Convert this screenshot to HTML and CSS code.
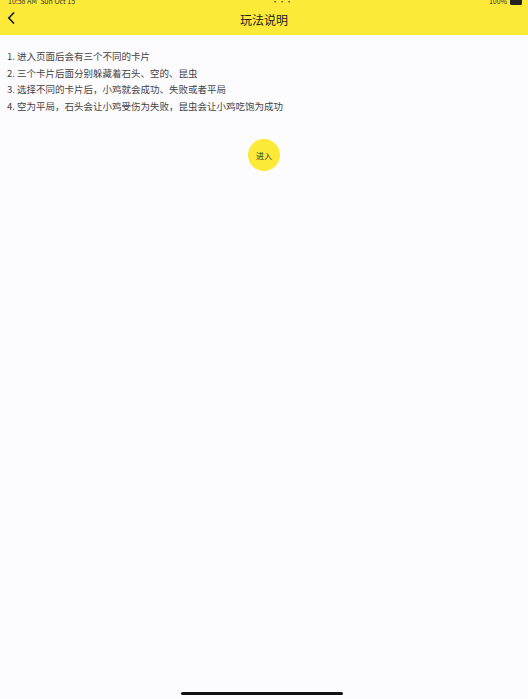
FILE: index.html
```html
<!DOCTYPE html>
<html lang="zh">
<head>
<meta charset="utf-8">
<link rel="stylesheet" href="styles.css">
</head>
<body>
<div class="page">
  <header class="topbar">
    <div class="status">
      <span class="status-left">10:58 AM&nbsp;&nbsp;Sun Oct 15</span>
      <span class="status-mid">•••</span>
      <span class="status-right">100% <span class="battery"></span></span>
    </div>
    <div class="nav">
      <svg class="back" width="8" height="12" viewBox="0 0 8 12"><path d="M6.5 1 L1.8 6 L6.5 11" fill="none" stroke="#222" stroke-width="1.8" stroke-linecap="round" stroke-linejoin="round"/></svg>
      <div class="title">玩法说明</div>
    </div>
  </header>
  <main class="content">
    <ol class="rules">
      <li>1. 进入页面后会有三个不同的卡片</li>
      <li>2. 三个卡片后面分别躲藏着石头、空的、昆虫</li>
      <li>3. 选择不同的卡片后，小鸡就会成功、失败或者平局</li>
      <li>4. 空为平局，石头会让小鸡受伤为失败，昆虫会让小鸡吃饱为成功</li>
    </ol>
    <div class="btn-wrap"><div class="enter">进入</div></div>
  </main>
  <div class="home"></div>
</div>
</body>
</html>
```
FILE: styles.css
```css
html, body {
  margin: 0;
  padding: 0;
  background: #fcfbfd;
  font-family: "Noto Sans CJK SC", "Noto Sans", sans-serif;
}
.page {
  width: 528px;
  height: 699px;
  display: flex;
  flex-direction: column;
  position: relative;
  overflow: hidden;
}
.topbar {
  background: #fde937;
  height: 35px;
  display: flex;
  flex-direction: column;
}
.status {
  height: 8px;
  display: flex;
  justify-content: space-between;
  align-items: flex-end;
  font-size: 7px;
  line-height: 7px;
  color: #333;
  padding: 0 6px 0 8px;
  margin-top: -3px;
}
.status-right {
  display: flex;
  align-items: center;
  gap: 3px;
}
.battery {
  display: inline-block;
  width: 12px;
  height: 6px;
  background: #222;
  border-radius: 1.5px;
}
.nav {
  flex: 1;
  display: flex;
  align-items: center;
  justify-content: center;
  position: relative;
}
.back {
  position: absolute;
  left: 7px;
  top: 7px;
}
.title {
  font-size: 12px;
  color: #222;
  margin-top: -1px;
}
.content {
  flex: 1;
}
.rules {
  list-style: none;
  margin: 0;
  padding: 13px 0 0 7px;
  font-size: 9.5px;
  line-height: 16.6px;
  color: #444;
}
.btn-wrap {
  display: flex;
  justify-content: center;
  padding-top: 25px;
}
.enter {
  width: 32px;
  height: 32px;
  border-radius: 50%;
  background: #fde937;
  display: flex;
  align-items: center;
  justify-content: center;
  font-size: 8px;
  color: #333;
}
.home {
  position: absolute;
  left: 181px;
  bottom: 4px;
  width: 162px;
  height: 3px;
  border-radius: 2px;
  background: #111;
}
```
